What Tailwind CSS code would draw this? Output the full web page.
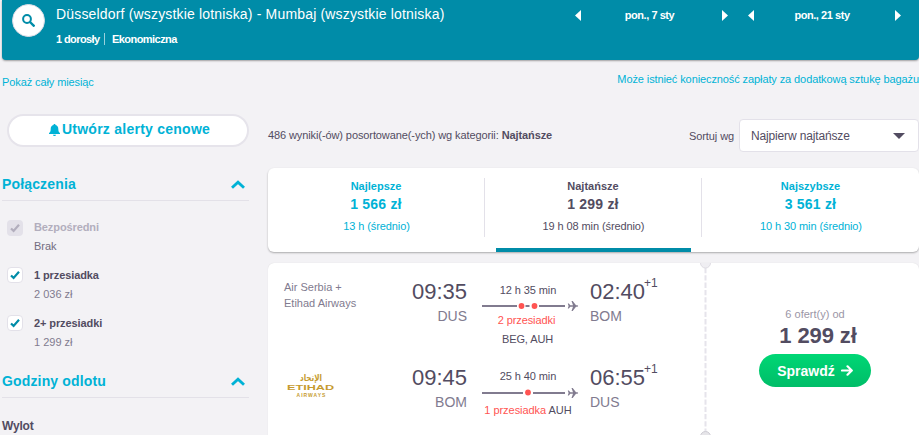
<!DOCTYPE html>
<html lang="pl">
 <head>
  <meta charset="utf-8"/>
  <meta content="width=device-width, initial-scale=1" name="viewport"/>
  <title>Düsseldorf - Mumbaj</title>
  <script src="https://cdn.jsdelivr.net/npm/@tailwindcss/browser@4"></script>
 </head>
 <body class="h-[435px] w-[919px] overflow-hidden bg-[#f3f2f5] font-['Liberation_Sans',Arial,sans-serif] text-[11px] leading-4 whitespace-nowrap text-[#524c61]">
  <!-- search summary -->
  <header class="ml-0.5 flex h-[60px] rounded-b bg-[#008ca8] pt-1 pl-[10px] text-white shadow-[0_1px_2px_rgba(0,0,0,0.35)]">
   <button class="flex size-[33px] items-center justify-center rounded-full border border-[#dddce5] bg-white">
    <svg class="size-[13px]" viewBox="0 0 13 13" fill="none" stroke="#008ca8" stroke-width="2"><circle cx="5" cy="5" r="3.9"/><path d="M8 8l4.500 4.500" stroke-width="2.400"/></svg>
   </button>
   <div class="ml-[11px] w-[519px]">
    <h1 class="mt-0.5 text-[14px] leading-4 tracking-[0.17px]">Düsseldorf (wszystkie lotniska) - Mumbaj (wszystkie lotniska)</h1>
    <div class="mt-[9px] flex text-[11px] font-bold">
     <span class="w-12 tracking-[-0.6px]">1 dorosły</span>
     <span class="mt-0.5 h-3 w-2 border-l border-white/60"></span>
     <span class="tracking-[-0.55px]">Ekonomiczna</span>
    </div>
   </div>
   <div class="mt-[3px] flex h-4 items-center font-bold">
    <svg class="h-[11px] w-[6px]" viewBox="0 0 6 11" fill="#fff"><path d="M6 0v11L0 5.500z"/></svg>
    <span class="w-[141px] pr-[4px] text-center tracking-[-0.45px]">pon., 7 sty</span>
    <svg class="h-[11px] w-[6px]" viewBox="0 0 6 11" fill="#fff"><path d="M0 0v11L6 5.500z"/></svg>
    <svg class="ml-5 h-[11px] w-[6px]" viewBox="0 0 6 11" fill="#fff"><path d="M6 0v11L0 5.500z"/></svg>
    <span class="w-[141px] pr-[5px] text-center tracking-[-0.45px]">pon., 21 sty</span>
    <svg class="h-[11px] w-[6px]" viewBox="0 0 6 11" fill="#fff"><path d="M0 0v11L6 5.500z"/></svg>
   </div>
  </header>
  <div class="flex h-[52px] justify-between pl-0.5 tracking-[-0.1px] text-[#00b2d6]">
   <a class="mt-[14px]">Pokaż cały miesiąc</a>
   <a class="mt-[11px]">Może istnieć konieczność zapłaty za dodatkową sztukę bagażu</a>
  </div>

  <div class="flex pl-0.5">
   <!-- filters -->
   <aside class="w-[247px] shrink-0">
    <button class="mt-[2px] ml-[5px] flex h-[33px] w-[242px] items-center justify-center gap-0.5 rounded-full border-2 border-[#e6e4eb] bg-white pb-[3px] pl-[3px] text-[14px] font-bold tracking-[0.25px] text-[#00b2d6]">
     <svg class="mt-0.5 h-3 w-[11px]" viewBox="0 0 11 12" fill="#00b2d6"><path d="M5.500 0c.8 0 1 .5 1 1C8.500 1.500 9.300 3 9.300 5c0 2.500.7 3.500 1.700 4v1H0V9c1-.5 1.700-1.500 1.700-4 0-2 .8-3.500 2.800-4 0-.5.2-1 1-1zM4 10.700h3c0 1.700-3 1.700-3 0z"/></svg>
     Utwórz alerty cenowe
    </button>
    <div class="mt-[27px] flex h-[27px] items-start justify-between border-b border-[#e3e1e8] pr-1">
     <h2 class="mt-0.5 text-[14px] leading-4 font-bold tracking-[0.15px] text-[#00b2d6]">Połączenia</h2>
     <svg class="mt-[6px] h-[9px] w-[14px]" viewBox="0 0 14 9" fill="none" stroke="#00b2d6" stroke-width="2.900"><path d="M1 7.700l6-5.500 6 5.500"/></svg>
    </div>
    <ul class="mt-[18px] pl-[5px]">
     <li class="flex h-12 gap-[11px]">
      <span class="mt-px flex size-4 items-center justify-center rounded-sm bg-[#e3e1e9]"><svg class="size-[10px]" viewBox="0 0 10 10" fill="none" stroke="#b2aebd" stroke-width="2.200"><path d="M1 5.500l2.600 2.400L9 1.800"/></svg></span>
      <div><b class="block tracking-[-0.1px] text-[#b2aebd]">Bezpośredni</b><span class="mt-[3px] block text-[#726c80]">Brak</span></div>
     </li>
     <li class="flex h-12 gap-[11px]">
      <span class="flex size-4 items-center justify-center rounded-sm border border-[#e3e1e9] bg-white"><svg class="size-[10px]" viewBox="0 0 10 10" fill="none" stroke="#008ca8" stroke-width="2.200"><path d="M1 5.500l2.600 2.400L9 1.800"/></svg></span>
      <div><b class="block tracking-[-0.1px]">1 przesiadka</b><span class="mt-[3px] block text-[#817b8f]">2 036 zł</span></div>
     </li>
     <li class="flex h-12 gap-[11px]">
      <span class="flex size-4 items-center justify-center rounded-sm border border-[#e3e1e9] bg-white"><svg class="size-[10px]" viewBox="0 0 10 10" fill="none" stroke="#008ca8" stroke-width="2.200"><path d="M1 5.500l2.600 2.400L9 1.800"/></svg></span>
      <div><b class="block tracking-[-0.1px]">2+ przesiadki</b><span class="mt-[3px] block text-[#817b8f]">1 299 zł</span></div>
     </li>
    </ul>
    <div class="mt-[8px] flex h-[27px] items-start justify-between border-b border-[#e3e1e8] pr-1">
     <h2 class="mt-0.5 text-[14px] leading-4 font-bold tracking-[0.15px] text-[#00b2d6]">Godziny odlotu</h2>
     <svg class="mt-[6px] h-[9px] w-[14px]" viewBox="0 0 14 9" fill="none" stroke="#00b2d6" stroke-width="2.900"><path d="M1 7.700l6-5.500 6 5.500"/></svg>
    </div>
    <h3 class="mt-5 text-[12px] leading-4 font-bold tracking-[-0.2px]">Wylot</h3>
   </aside>

   <!-- results -->
   <main class="ml-[19px] w-[651px] shrink-0">
    <div class="flex h-[56px] items-start justify-between">
     <p class="mt-[15px] tracking-[-0.1px]">486 wyniki(-ów) posortowane(-ych) wg kategorii: <b>Najtańsze</b></p>
     <div class="mt-[7px] flex items-center">
      <span class="mt-px mr-[5px] tracking-[-0.1px]">Sortuj wg</span>
      <div class="flex h-[33px] w-[180px] items-center justify-between rounded-sm border border-[#e3e1e9] bg-white pr-[13px] pl-[11px] text-[12px] tracking-[-0.15px]">
       Najpierw najtańsze
       <svg class="h-[6px] w-3" viewBox="0 0 12 6" fill="#524c61"><path d="M0 0h12L6 6z"/></svg>
      </div>
     </div>
    </div>

    <div class="flex h-[84px] rounded-md bg-white pt-[10px] text-center shadow-[0_1px_2px_rgba(0,0,0,0.3)]">
     <div class="h-[59px] w-[217px] border-r border-[#e3e1e9] text-[#00b2d6]">
      <b class="block">Najlepsze</b><b class="mt-0.5 block text-[14px] tracking-[0.2px]">1 566 zł</b><span class="mt-[6px] block pl-px tracking-[-0.1px]">13 h (średnio)</span>
     </div>
     <div class="relative h-[59px] w-[217px] border-r border-[#e3e1e9]">
      <b class="block">Najtańsze</b><b class="mt-0.5 block text-[14px] tracking-[0.2px]">1 299 zł</b><span class="mt-[6px] block pl-px tracking-[-0.1px]">19 h 08 min (średnio)</span>
      <i class="absolute top-[70px] left-[11px] h-1 w-[195px] bg-[#008ca8]"></i>
     </div>
     <div class="h-[59px] w-[217px] text-[#00b2d6]">
      <b class="block">Najszybsze</b><b class="mt-0.5 block text-[14px] tracking-[0.2px]">3 561 zł</b><span class="mt-[6px] block pl-px tracking-[-0.1px]">10 h 30 min (średnio)</span>
     </div>
    </div>

    <article class="relative mt-[11px] flex h-[175px] rounded-t-md bg-white shadow-[0_0_1px_rgba(0,0,0,0.15)]">
     <div class="w-[437px] shrink-0">
      <div class="flex h-[86px] pt-4 pl-4">
       <div class="w-[104px] text-[#817b8f]">Air Serbia +<br/>Etihad Airways</div>
       <div class="w-[79px] text-right text-[22px] leading-[26px]">09:35<span class="block text-[14px] leading-[23px] text-[#817b8f]">DUS</span></div>
       <div class="ml-[15px] w-[91px] pt-[3px] text-center">
        <span class="block pl-px tracking-[-0.1px]">12 h 35 min</span>
        <svg class="mt-0.5 h-3 w-[97px]" viewBox="0 0 97 12"><path d="M0 6h35M43.500 6h4M57 6h26" stroke="#817b8f" stroke-width="2"/><circle cx="39.500" cy="6" r="2.900" fill="#ff5452"/><circle cx="52.500" cy="6" r="2.900" fill="#ff5452"/><path d="M85.800 3.500h1l1.500 1.800h2.700L89.500 1h1.200l3.300 4.300h1.500q1.400.7 0 1.400H94L90.700 11h-1.200L91 6.700h-2.700l-1.500 1.800h-1L86.600 6z" fill="#817b8f"/></svg>
        <span class="block pr-0.5 tracking-[-0.1px] text-[#ff5452]">2 przesiadki</span>
        <span class="mt-[3px] block tracking-[-0.1px]">BEG, AUH</span>
       </div>
       <div class="ml-[17px] text-[22px] leading-[26px]">02:40<sup class="relative -top-3 -left-px text-[12px] leading-none">+1</sup><span class="block text-[14px] leading-[23px] text-[#817b8f]">BOM</span></div>
      </div>
      <div class="flex h-[86px] pt-4 pl-4">
       <div class="w-[104px] pt-[8px] pl-[3px] text-[#c69b2f]">
        <div class="w-12 text-center">
         <div class="h-[10px] scale-x-80 font-['DejaVu_Sans',sans-serif] text-[9px] leading-[10px] font-bold">الإتحاد</div>
         <div class="h-[9px] origin-left scale-x-[1.58] text-left text-[8px] leading-[9px] font-bold">ETIHAD</div>
         <div class="pl-px text-[5px] leading-[6px] font-bold tracking-[1px]">AIRWAYS</div>
        </div>
       </div>
       <div class="w-[79px] text-right text-[22px] leading-[26px]">09:45<span class="block text-[14px] leading-[23px] text-[#817b8f]">BOM</span></div>
       <div class="ml-[15px] w-[91px] pt-[3px] text-center">
        <span class="block pl-px tracking-[-0.1px]">25 h 40 min</span>
        <svg class="mt-[3px] h-3 w-[97px]" viewBox="0 0 97 12"><path d="M0 6h41M51 6h32" stroke="#817b8f" stroke-width="2"/><circle cx="46" cy="5.500" r="2.900" fill="#ff5452"/><path d="M85.800 3.500h1l1.500 1.800h2.700L89.500 1h1.200l3.300 4.300h1.500q1.400.7 0 1.400H94L90.700 11h-1.200L91 6.700h-2.700l-1.500 1.800h-1L86.600 6z" fill="#817b8f"/></svg>
        <span class="mt-[3px] block pl-px tracking-[-0.05px]"><span class="text-[#ff5452]">1 przesiadka</span> AUH</span>
       </div>
       <div class="ml-[17px] text-[22px] leading-[26px]">06:55<sup class="relative -top-3 -left-px text-[12px] leading-none">+1</sup><span class="block text-[14px] leading-[23px] text-[#817b8f]">DUS</span></div>
      </div>
     </div>
     <!-- ticket stub -->
     <div class="absolute inset-y-0 left-[432px] w-[11px] overflow-hidden">
      <svg class="h-[175px] w-[11px]" viewBox="0 0 11 175"><path d="M5.500 5v164" stroke="#e6e4eb" stroke-width="2" stroke-dasharray="5.300 2"/><circle cx="5.500" cy="0" r="5" fill="#efeef2" stroke="#dedce3"/><circle cx="5.500" cy="173.500" r="5" fill="#e6e5e9" stroke="#cfcdd4"/></svg>
     </div>
     <div class="flex w-[220px] shrink-0 flex-col items-center pt-[43px]">
      <span class="text-[#9b96a6]">6 ofert(y) od</span>
      <b class="mt-px pl-[6px] text-[22px] leading-[26px] tracking-[-0.1px]">1 299 zł</b>
      <button class="mt-[5px] flex h-[33px] w-[112px] items-center justify-center gap-[6px] rounded-full bg-linear-to-b from-[#00d775] to-[#00bd68] text-[14px] font-bold text-white">
       Sprawdź
       <svg class="h-[11px] w-3" viewBox="0 0 12 11" fill="none" stroke="#fff" stroke-width="2.200" stroke-linecap="round" stroke-linejoin="round"><path d="M1 5.500h9.500M6.500 1.300l4.300 4.200-4.300 4.200"/></svg>
      </button>
     </div>
    </article>
   </main>
  </div>
 </body>
</html>
